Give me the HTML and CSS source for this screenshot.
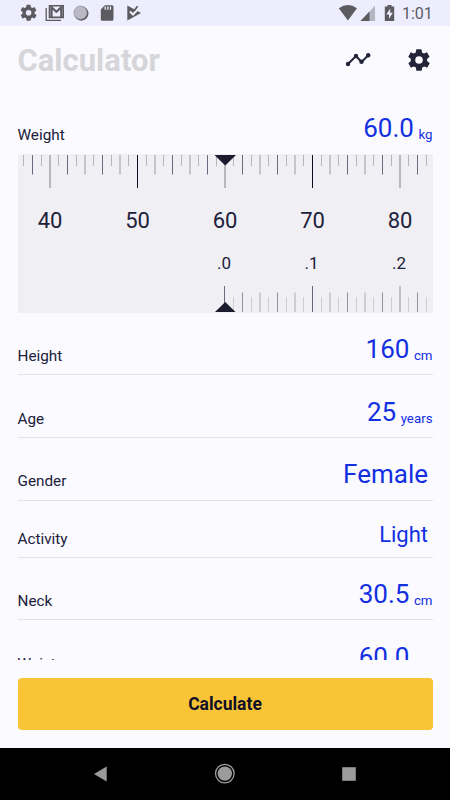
FILE: index.html
```html
<!DOCTYPE html>
<html lang="en">
<head>
  <meta charset="UTF-8"/>
  <meta name="viewport" content="width=device-width, initial-scale=1.0"/>
  <title>Calculator</title>
  <link rel="stylesheet" href="styles.css">
</head>
<body>
  <div class="statusbar">
    <svg class="status-left" width="130" height="26" viewBox="0 0 130 26">
      <g transform="translate(10 0)">
        <path transform="translate(9 3.2) scale(.8)" fill-rule="evenodd" d="M19.400 13c0-.3.1-.6.1-1s0-.7-.1-1l2.100-1.700c.2-.1.2-.4.1-.6l-2-3.500c-.1-.2-.4-.3-.6-.2l-2.500 1c-.5-.4-1.100-.7-1.700-1l-.4-2.600c0-.2-.2-.4-.5-.4h-4c-.2 0-.5.2-.5.4L9 5c-.6.3-1.200.6-1.700 1l-2.500-1c-.2-.1-.5 0-.6.2l-2 3.500c-.1.2-.1.5.1.6L4.500 11c0 .3-.1.6-.1 1s0 .7.1 1l-2.100 1.700c-.2.1-.2.4-.1.6l2 3.500c.1.2.4.3.6.2l2.500-1c.5.4 1.100.7 1.700 1l.4 2.600c0 .2.2.4.5.4h4c.2 0 .5-.2.5-.4L15 19c.6-.3 1.200-.6 1.700-1l2.500 1c.2.1.5 0 .6-.2l2-3.500c.1-.2.1-.5-.1-.6zM12 15.500a3.500 3.500 0 1 1 0-7 3.500 3.500 0 0 1 0 7z"/>
        <g fill="none" stroke="#5b5b60">
          <path stroke-width="1.300" d="M36.200 8v12.300H51"/>
          <path stroke-width="1.600" d="M39.500 5.700h13.700v11.700H39.500z"/>
          <path stroke-width="2.200" d="M41.500 17V7.300l4.900 4.500 4.900-4.500V17"/>
        </g>
        <circle cx="71.300" cy="13.500" r="7.200"/>
        <circle class="dial" cx="70.400" cy="12.700" r="6.600"/>
      </g>
      <path fill-rule="evenodd" d="M104.800 5.300h7.200q1.500 0 1.500 1.500v12.500q0 1.500-1.500 1.500h-9.700q-1.500 0-1.500-1.500v-9.700zM104.600 6.500v3.300h1.300V6.500zm2.600 0v3.300h1.300V6.500zm2.600 0v3.300h1.300V6.500z"/>
    </svg>
    <svg class="status-play" width="16" height="26" viewBox="0 0 16 26">
      <path d="M1.300 5.500 15 13 1.300 20.500z"/>
      <path fill="none" stroke="#eeedfd" stroke-width="2" d="m4 11.500 3 3 7.500-8"/>
      <path fill="none" stroke="#5b5b60" stroke-width="1.800" d="M8.500 10.300 11.600 6.300"/>
    </svg>
    <svg class="status-right" width="62" height="26" viewBox="0 0 62 26">
      <path d="M.8 8.200Q9.800 1.700 19 8.200L9.900 20.500z"/>
      <path opacity=".38" d="M37 5.700V21H22.500z"/>
      <path d="M31.500 11.500V21h-9z"/>
      <path fill-rule="evenodd" d="M49.500 5h4v1.500h2.700V21h-9.400V6.500h2.700zM52.200 8.500l-3.800 6h2.600v4.300l3.800-6h-2.600z"/>
    </svg>
    <span class="clock">1:01</span>
  </div>

  <header class="topbar">
    <h1>Calculator</h1>
    <svg class="icon-chart" width="26" height="26" viewBox="0 0 26 26">
      <path fill="none" stroke="#23243a" stroke-width="2" d="m3 18 8-8 5.500 6 6.800-6.800"/>
      <circle cx="3" cy="18" r="2.200"/><circle cx="11" cy="10" r="2.200"/>
      <circle cx="16.500" cy="15.800" r="2.200"/><circle cx="23.200" cy="9.200" r="2.200"/>
    </svg>
    <svg class="icon-gear" width="26" height="26" viewBox="0 0 24 24">
      <path fill-rule="evenodd" d="M19.400 13c0-.3.1-.6.1-1s0-.7-.1-1l2.100-1.700c.2-.1.2-.4.1-.6l-2-3.500c-.1-.2-.4-.3-.6-.2l-2.500 1c-.5-.4-1.100-.7-1.700-1l-.4-2.600c0-.2-.2-.4-.5-.4h-4c-.2 0-.5.2-.5.4L9 5c-.6.3-1.200.6-1.700 1l-2.500-1c-.2-.1-.5 0-.6.2l-2 3.500c-.1.2-.1.5.1.6L4.500 11c0 .3-.1.6-.1 1s0 .7.1 1l-2.100 1.700c-.2.1-.2.4-.1.6l2 3.500c.1.2.4.3.6.2l2.500-1c.5.4 1.100.7 1.700 1l.4 2.600c0 .2.2.4.5.4h4c.2 0 .5-.2.5-.4L15 19c.6-.3 1.200-.6 1.700-1l2.500 1c.2.1.5 0 .6-.2l2-3.500c.1-.2.1-.5-.1-.6zM12 15.500a3.500 3.500 0 1 1 0-7 3.500 3.500 0 0 1 0 7z"/>
    </svg>
  </header>

  <main class="form">
    <div class="row open"><span class="label">Weight</span><span class="value">60.0</span><span class="unit">kg</span></div>
    <div class="ruler">
      <svg id="ticks-top" width="415" height="36" viewBox="18 154 415 36"></svg>
      <div class="scale whole"><span>40</span><span>50</span><span>60</span><span>70</span><span>80</span></div>
      <div class="scale tenths"><span></span><span></span><span>.0</span><span>.1</span><span>.2</span></div>
      <svg id="ticks-bottom" width="415" height="28" viewBox="18 284 415 28"></svg>
    </div>
    <div class="row"><span class="label">Height</span><span class="value">160</span><span class="unit">cm</span></div>
    <div class="row"><span class="label">Age</span><span class="value">25</span><span class="unit">years</span></div>
    <div class="row tall"><span class="label">Gender</span><span class="value choice">Female</span></div>
    <div class="row short"><span class="label">Activity</span><span class="value choice small">Light</span></div>
    <div class="row"><span class="label">Neck</span><span class="value">30.5</span><span class="unit">cm</span></div>
    <div class="row"><span class="label">Waist</span><span class="value">60.0</span><span class="unit">cm</span></div>
  </main>

  <div class="actions"><button class="calculate">Calculate</button></div>

  <nav class="navbar">
    <svg width="450" height="52" viewBox="0 748 450 52">
      <path d="M94 774l12.700-7.500v15z"/>
      <circle cx="224.800" cy="773.600" r="7.200"/>
      <circle cx="224.800" cy="773.600" r="9.300" fill="none" stroke="#9b9b9b" stroke-width="1.300"/>
      <path d="M342.200 767.200h13.600v13.600h-13.600z"/>
    </svg>
  </nav>

  <script>
    const center = 225, step = 8.75;

    function rect(x, y, w, h, color) {
      return `<rect x="${x}" y="${y}" width="${w}" height="${h}" fill="${color}"/>`;
    }

    // One tick per step: long every 10, medium every 2, short otherwise
    function ticks(from, to, heights, colors, place) {
      let out = '';
      for (let k = from; k <= to; k++) {
        const x = center + k * step;
        const kind = k % 10 === 0 ? 0 : k % 2 === 0 ? 1 : 2;
        const wide = kind < 2 && Number.isInteger(x);
        const h = heights[kind];
        const color = wide ? colors.wide[kind] : colors.thin[kind];
        out += rect(wide ? x - 1 : Math.floor(x), place(h), wide ? 2 : 1, h, color);
      }
      return out;
    }

    document.getElementById('ticks-top').innerHTML =
      ticks(-23, 23, [33, 19.5, 11],
        { thin: ['#0c0c1c', '#696a7b', '#b5b5bb'], wide: ['#b8b8bd', '#c5c5ca'] }, () => 155) +
      '<path fill="#1b1b2d" d="M214.500 155h21.500l-10.750 10.500z"/>';

    document.getElementById('ticks-bottom').innerHTML =
      rect(224, 286, 1, 26, '#6b6b7b') +
      ticks(1, 23, [26, 19.5, 15],
        { thin: ['#656575', '#92929e', '#cdcdd2'], wide: ['#c1c1c6', '#cecdd3'] }, h => 312 - h) +
      '<path fill="#1b1b2d" d="M215 312h20.500l-10.250-10z"/>';
  </script>
</body>
</html>
```

FILE: styles.css
```css
* { box-sizing: border-box; margin: 0; padding: 0; }
:root { --bg: #fbfaff; --text: #20213a; --accent: #1230e0; --gray: #5b5b60; }
body {
  width: 450px; height: 800px; overflow: hidden;
  display: flex; flex-direction: column;
  font-family: Roboto, sans-serif;
  background: var(--bg); color: var(--text);
}
svg { display: block; flex: none; }
.statusbar {
  height: 26px; flex: none; display: flex; align-items: center;
  background: #eeedfd; color: var(--gray);
}
.statusbar svg { fill: var(--gray); }
.status-play { margin-left: -4px; }
.dial { fill: #b9b8c4; stroke: #8d8c98; stroke-width: 1; stroke-dasharray: 1 1; }
.statusbar .status-right { margin-left: 196px; }
.clock { font-size: 16px; margin-left: 2px; padding-top: 1px; }
.topbar {
  height: 65.5px; flex: none; display: flex; align-items: flex-start;
  padding: 20px 18px 0 17.5px; fill: #23243a;
}
h1 { flex: 1; font-size: 31px; line-height: 30px; font-weight: 700; color: #d5d5da; }
.icon-chart { margin-right: 35px; }
.icon-gear { margin-top: 1px; }
.form { height: 568.5px; flex: none; overflow: hidden; padding: 0 17.5px; }
.row {
  height: 62.5px; display: flex; align-items: baseline; padding-top: 21.5px;
  border-bottom: 1px solid #e4e4e8;
}
.row.tall { height: 63px; }
.row.short { height: 57px; padding-top: 20.5px; }
.row.open { border-bottom-color: transparent; }
.label { flex: 1; font-size: 15.3px; position: relative; top: 3px; }
.row.short .label { top: 2px; }
.value { font-size: 26px; line-height: 31px; color: var(--accent); }
.value.choice { padding-right: 4.5px; }
.value.small { font-size: 22px; line-height: 27px; }
.unit { font-size: 13.3px; color: var(--accent); margin-left: 4.5px; position: relative; top: 2px; }
.ruler {
  height: 158.5px; background: #f0eff4;
  display: flex; flex-direction: column;
}
.scale { display: grid; grid-template-columns: repeat(5, 87.5px); margin: 0 -11.25px; text-align: center; }
.whole { height: 26px; font-size: 22px; line-height: 26px; margin-top: 17.5px; }
.tenths { height: 20px; font-size: 17px; line-height: 20px; margin: 19.5px -11.25px 0 -12.25px; }
#ticks-bottom { margin-top: auto; margin-bottom: 1px; }
.actions { flex: 1; padding: 17.5px 17.5px 0; }
.calculate {
  width: 100%; height: 52.5px; border: none; border-radius: 4px;
  background: #f9c537; color: #0f0f25;
  font: 700 17.5px Roboto, sans-serif; cursor: pointer;
}
.navbar { height: 52px; flex: none; background: #000; fill: #9b9b9b; }
```
